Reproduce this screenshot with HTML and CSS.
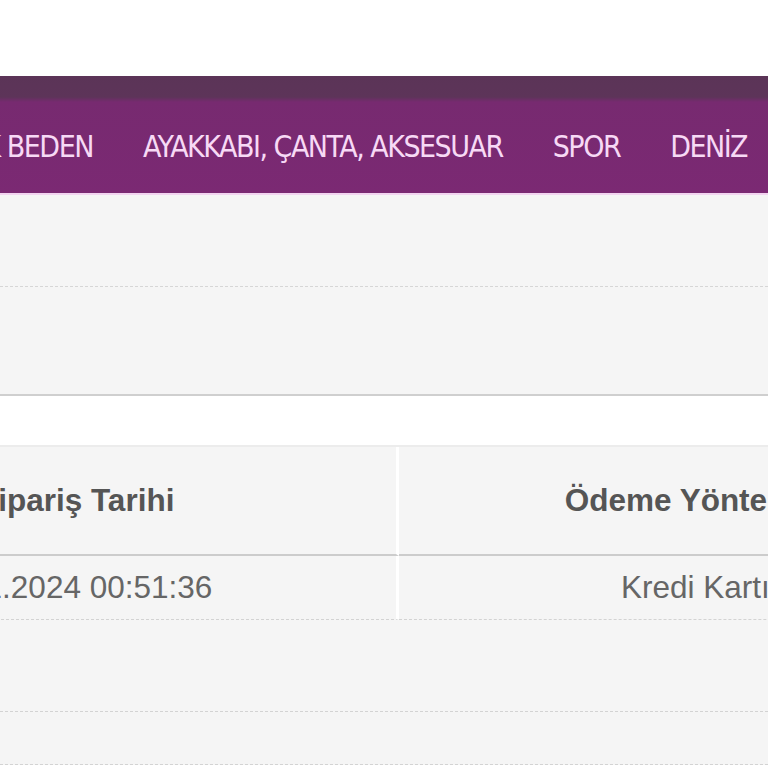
FILE: index.html
```html
<!DOCTYPE html>
<html lang="tr">
<head>
<meta charset="utf-8">
<title>Siparişlerim</title>
<link rel="stylesheet" href="styles.css">
</head>
<body>
<div class="page">
  <div class="topbar"></div>
  <nav class="nav">
    <ul class="menu">
      <li class="menu-item first">BÜYÜK BEDEN</li>
      <li class="menu-item">AYAKKABI, ÇANTA, AKSESUAR</li>
      <li class="menu-item">SPOR</li>
      <li class="menu-item">DENİZ</li>
      <li class="menu-item">OUTLET</li>
    </ul>
  </nav>
  <section class="crumbs">
    <div class="crumb-row"></div>
    <div class="crumb-row second"></div>
  </section>
  <div class="spacer"></div>
  <div class="table-wrap">
    <table class="orders">
      <thead>
        <tr>
          <th class="col-date">Sipariş Tarihi</th>
          <th class="col-pay">Ödeme Yöntemi</th>
        </tr>
      </thead>
      <tbody>
        <tr>
          <td class="col-date date">04.01.2024 00:51:36</td>
          <td class="col-pay pay">Kredi Kartı</td>
        </tr>
      </tbody>
    </table>
    <div class="extra-row"></div>
    <div class="extra-row short"></div>
  </div>
</div>
</body>
</html>
```

FILE: styles.css
```css
html, body {
  margin: 0;
  padding: 0;
  background: #ffffff;
  overflow: hidden;
}
.page {
  width: 768px;
  height: 768px;
  overflow: hidden;
  font-family: "Liberation Sans", Arial, sans-serif;
}
.topbar {
  height: 76px;
  background: #ffffff;
}
.nav {
  height: 117px;
  background: linear-gradient(#5b3457 0px, #5d3459 21px, #772a70 26px, #7b2973 100%);
  border-bottom: 2px solid #f2d4f0;
  overflow: hidden;
}
.menu {
  list-style: none;
  margin: 0 0 0 -110px;
  padding: 24px 0 0 0;
  display: flex;
  align-items: center;
  height: 100%;
  box-sizing: border-box;
  white-space: nowrap;
}
.menu-item {
  font-family: "DejaVu Sans Condensed", "DejaVu Sans", sans-serif;
  font-stretch: condensed;
  font-size: 30px;
  letter-spacing: -1.5px;
  color: #f7d9f5;
  padding: 0 25px;
  line-height: 1;
}
.crumbs {
  background: #f5f5f5;
  border-bottom: 2px solid #cfcfcf;
}
.crumb-row {
  height: 91px;
  border-bottom: 1px dashed #d6d6d6;
}
.crumb-row.second {
  height: 107px;
  border-bottom: none;
}
.spacer {
  height: 49px;
  background: #ffffff;
  border-bottom: 2px solid #ececec;
}
.table-wrap {
  background: #f5f5f5;
  overflow: hidden;
}
.orders {
  border-collapse: separate;
  border-spacing: 0;
  margin-left: -244px;
  table-layout: fixed;
  width: 1230px;
}
.orders th, .orders td {
  text-align: center;
  padding: 0;
  white-space: nowrap;
}
.orders .col-date {
  width: 638px;
  border-right: 3px solid #ffffff;
}
.orders .col-pay {
  width: 586px;
}
.orders th {
  height: 107px;
  font-size: 31.5px;
  font-weight: bold;
  color: #555555;
  border-bottom: 2px solid #cccccc;
}
.orders th.col-pay {
  text-indent: -16px;
}
.orders td {
  height: 63px;
  font-size: 31.5px;
  color: #666666;
  border-bottom: 1px dashed #d3d3d3;
}
.orders td.date {
  text-indent: -16px;
}
.orders td.pay {
  text-indent: 6px;
}
.extra-row {
  height: 91px;
  border-bottom: 1px dashed #d3d3d3;
}
.extra-row.short {
  height: 52px;
}
```
